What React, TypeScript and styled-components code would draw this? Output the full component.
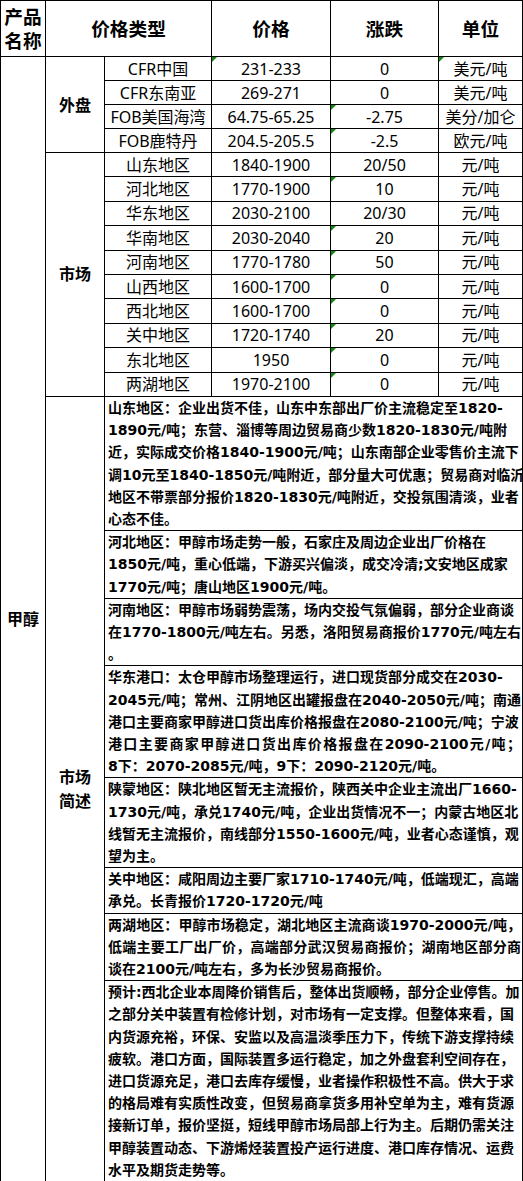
import React from 'react'
import styled, { createGlobalStyle, css } from 'styled-components'

const GlobalStyle = createGlobalStyle`
  html, body {
    margin: 0;
    padding: 0;
    background: #fff;
  }
  body {
    font-family: "Noto Sans", "Noto Sans CJK SC", sans-serif;
    color: #000;
  }
`

const Sheet = styled.table`
  width: 523px;
  border-collapse: collapse;
  table-layout: fixed;
  font-family: "Noto Sans", "Noto Sans CJK SC", sans-serif;
  color: #000;

  th, td {
    border: 1px solid #000;
    padding: 0;
  }
`

const Row = styled.tr<{ $h: number }>`
  height: ${p => p.$h}px;
`

const HeadCell = styled.th`
  font-size: 18.67px;
  font-weight: 700;
  line-height: 24px;
  text-align: center;
  vertical-align: middle;
`

const LabelCell = styled.td`
  font-size: 16px;
  font-weight: 700;
  line-height: 24px;
  text-align: center;
  vertical-align: middle;
`

const DataCell = styled.td<{ $flag?: boolean }>`
  position: relative;
  font-size: 16px;
  font-weight: 400;
  line-height: 20px;
  text-align: center;
  vertical-align: middle;
  white-space: nowrap;
  overflow: hidden;

  ${p =>
    p.$flag &&
    css`
      &::before {
        content: '';
        position: absolute;
        top: 0;
        left: 0;
        border-top: 5px solid #0f8a0f;
        border-right: 5px solid transparent;
      }
    `}
`

const NotesCell = styled.td`
  vertical-align: top;
`

const Note = styled.div`
  padding: 0 1px 0 3px;
  font-family: "DejaVu Sans", "Noto Sans CJK SC", sans-serif;
  font-size: 14px;
  font-weight: 700;
  line-height: 22.2px;
  border-top: 1px solid #000;

  &:first-child {
    border-top: none;
  }
`

const NoteLine = styled.div<{ $spread?: boolean }>`
  white-space: nowrap;
  ${p =>
    p.$spread &&
    css`
      white-space: normal;
      text-align: justify;
      text-align-last: justify;
    `}
`

type PriceRow = {
  name: string
  price: string
  change: string
  unit: string
  flagPrice?: boolean
  flagChange?: boolean
  flagUnit?: boolean
}

const outer: PriceRow[] = [
  { name: 'CFR中国', price: '231-233', change: '0', unit: '美元/吨', flagPrice: true, flagUnit: true },
  { name: 'CFR东南亚', price: '269-271', change: '0', unit: '美元/吨' },
  { name: 'FOB美国海湾', price: '64.75-65.25', change: '-2.75', unit: '美分/加仑', flagChange: true },
  { name: 'FOB鹿特丹', price: '204.5-205.5', change: '-2.5', unit: '欧元/吨', flagChange: true },
]

const market: PriceRow[] = [
  { name: '山东地区', price: '1840-1900', change: '20/50', unit: '元/吨' },
  { name: '河北地区', price: '1770-1900', change: '10', unit: '元/吨', flagChange: true },
  { name: '华东地区', price: '2030-2100', change: '20/30', unit: '元/吨' },
  { name: '华南地区', price: '2030-2040', change: '20', unit: '元/吨', flagChange: true },
  { name: '河南地区', price: '1770-1780', change: '50', unit: '元/吨', flagChange: true },
  { name: '山西地区', price: '1600-1700', change: '0', unit: '元/吨', flagChange: true },
  { name: '西北地区', price: '1600-1700', change: '0', unit: '元/吨', flagChange: true },
  { name: '关中地区', price: '1720-1740', change: '20', unit: '元/吨', flagChange: true },
  { name: '东北地区', price: '1950', change: '0', unit: '元/吨', flagChange: true },
  { name: '两湖地区', price: '1970-2100', change: '0', unit: '元/吨', flagChange: true },
]

type Line = string | { text: string; spread: true }

const notes: Line[][] = [
  [
    '山东地区：企业出货不佳，山东中东部出厂价主流稳定至1820-',
    '1890元/吨；东营、淄博等周边贸易商少数1820-1830元/吨附',
    '近，实际成交价格1840-1900元/吨；山东南部企业零售价主流下',
    '调10元至1840-1850元/吨附近，部分量大可优惠；贸易商对临沂',
    '地区不带票部分报价1820-1830元/吨附近，交投氛围清淡，业者',
    '心态不佳。',
  ],
  [
    '河北地区：甲醇市场走势一般，石家庄及周边企业出厂价格在',
    '1850元/吨，重心低端，下游买兴偏淡，成交冷清;文安地区成家',
    '1770元/吨；唐山地区1900元/吨。',
  ],
  [
    '河南地区：甲醇市场弱势震荡，场内交投气氛偏弱，部分企业商谈',
    '在1770-1800元/吨左右。另悉，洛阳贸易商报价1770元/吨左右',
    '。',
  ],
  [
    '华东港口：太仓甲醇市场整理运行，进口现货部分成交在2030-',
    '2045元/吨；常州、江阴地区出罐报盘在2040-2050元/吨；南通',
    '港口主要商家甲醇进口货出库价格报盘在2080-2100元/吨；宁波',
    { text: '港口主要商家甲醇进口货出库价格报盘在2090-2100元/吨；', spread: true },
    '8下：2070-2085元/吨，9下：2090-2120元/吨。',
  ],
  [
    '陕蒙地区：陕北地区暂无主流报价，陕西关中企业主流出厂1660-',
    '1730元/吨，承兑1740元/吨，企业出货情况不一；内蒙古地区北',
    '线暂无主流报价，南线部分1550-1600元/吨，业者心态谨慎，观',
    '望为主。',
  ],
  [
    '关中地区：咸阳周边主要厂家1710-1740元/吨，低端现汇，高端',
    '承兑。长青报价1720-1720元/吨',
  ],
  [
    { text: '两湖地区：甲醇市场稳定，湖北地区主流商谈1970-2000元/吨，', spread: true },
    { text: '低端主要工厂出厂价，高端部分武汉贸易商报价；湖南地区部分商', spread: true },
    '谈在2100元/吨左右，多为长沙贸易商报价。',
  ],
  [
    '预计:西北企业本周降价销售后，整体出货顺畅，部分企业停售。加',
    '之部分关中装置有检修计划，对市场有一定支撑。但整体来看，国',
    '内货源充裕，环保、安监以及高温淡季压力下，传统下游支撑持续',
    '疲软。港口方面，国际装置多运行稳定，加之外盘套利空间存在，',
    '进口货源充足，港口去库存缓慢，业者操作积极性不高。供大于求',
    '的格局难有实质性改变，但贸易商拿货多用补空单为主，难有货源',
    '接新订单，报价坚挺，短线甲醇市场局部上行为主。后期仍需关注',
    '甲醇装置动态、下游烯烃装置投产运行进度、港口库存情况、运费',
    '水平及期货走势等。',
  ],
]

const PriceCells: React.FC<{ row: PriceRow }> = ({ row }) => (
  <>
    <DataCell>{row.name}</DataCell>
    <DataCell $flag={row.flagPrice}>{row.price}</DataCell>
    <DataCell $flag={row.flagChange}>{row.change}</DataCell>
    <DataCell $flag={row.flagUnit}>{row.unit}</DataCell>
  </>
)

export default function App() {
  const total = 1 + outer.length + market.length

  return (
    <>
      <GlobalStyle />
      <Sheet>
        <colgroup>
          <col style={{ width: 45 }} />
          <col style={{ width: 59 }} />
          <col style={{ width: 107 }} />
          <col style={{ width: 119 }} />
          <col style={{ width: 108 }} />
          <col style={{ width: 84 }} />
        </colgroup>
        <tbody>
          <Row $h={56}>
            <HeadCell>
              产品
              <br />
              名称
            </HeadCell>
            <HeadCell colSpan={2}>价格类型</HeadCell>
            <HeadCell>价格</HeadCell>
            <HeadCell>涨跌</HeadCell>
            <HeadCell>单位</HeadCell>
          </Row>

          {outer.map((row, i) => (
            <Row $h={24} key={row.name}>
              {i === 0 && <LabelCell rowSpan={total}>甲醇</LabelCell>}
              {i === 0 && <LabelCell rowSpan={outer.length}>外盘</LabelCell>}
              <PriceCells row={row} />
            </Row>
          ))}

          {market.map((row, i) => (
            <Row $h={24.4} key={row.name}>
              {i === 0 && <LabelCell rowSpan={market.length}>市场</LabelCell>}
              <PriceCells row={row} />
            </Row>
          ))}

          <tr>
            <LabelCell>
              市场
              <br />
              简述
            </LabelCell>
            <NotesCell colSpan={4}>
              {notes.map((lines, i) => (
                <Note key={i}>
                  {lines.map((line, j) =>
                    typeof line === 'string' ? (
                      <NoteLine key={j}>{line}</NoteLine>
                    ) : (
                      <NoteLine key={j} $spread>
                        {line.text}
                      </NoteLine>
                    )
                  )}
                </Note>
              ))}
            </NotesCell>
          </tr>
        </tbody>
      </Sheet>
    </>
  )
}
